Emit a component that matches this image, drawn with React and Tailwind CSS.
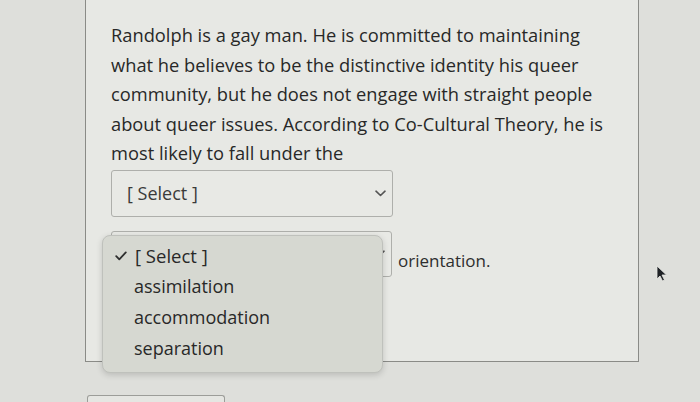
import React from "react";

function Chevron({ className }) {
  return (
    <svg className={className} width="11" height="7" viewBox="0 0 11 7" fill="none">
      <path d="M1 1.2 L5.5 5.5 L10 1.2" stroke="#555" strokeWidth="1.6" strokeLinecap="round" strokeLinejoin="round" />
    </svg>
  );
}

export default function App() {
  const font = { fontFamily: "'Open Sans', Lato, sans-serif" };
  return (
    <div className="relative w-[700px] h-[402px] overflow-hidden bg-[#dedfdb] text-[#282828]" style={font}>
      <div className="ml-[85px] w-[554px] h-[362px] border-l border-r border-b border-[#8a8b87] bg-[#e7e8e4] pl-[25px] pt-[20px]">
        <p className="text-[18.3px] leading-[29.5px] whitespace-nowrap">
          Randolph is a gay man. He is committed to maintaining<br />
          what he believes to be the distinctive identity his queer<br />
          community, but he does not engage with straight people<br />
          about queer issues. According to Co-Cultural Theory, he is<br />
          most likely to fall under the
        </p>
        <div className="mt-[2px] w-[282px] h-[47px] rounded-[3px] border border-[#aeafab] bg-[#e8e9e5] flex items-center justify-between pl-[15px] pr-[6px]">
          <span className="text-[18px] text-[#3a3a3a]">[ Select ]</span>
          <Chevron />
        </div>
        <div className="mt-[14px] flex items-start gap-[6px]">
          <div className="w-[281px] h-[46px] rounded-[3px] border border-[#aeafab] bg-[#e8e9e5] flex items-center justify-end pr-[6px]">
            <Chevron />
          </div>
          <span className="text-[17px] text-[#2e2e2e] mt-[17px]">orientation.</span>
        </div>
      </div>
      <div className="ml-[87px] mt-[33px] w-[138px] h-[7px] rounded-t-[3px] border-t border-l border-r border-[#9c9d99] bg-[#e5e6e2]" />

      {/* open dropdown menu */}
      <div className="absolute left-[102px] top-[235px] w-[281px] h-[138px] rounded-[8px] bg-[#d6d8d1] border border-[#bfc1bc] shadow-[0_2px_6px_rgba(0,0,0,0.16)] pt-[4px]">
        <div className="flex items-center h-[31px] pl-[12px] text-[18.5px]">
          <svg width="12" height="10" viewBox="0 0 12 10" fill="none" className="mr-[8px]">
            <path d="M1.2 5.2 L4.3 8.4 L10.8 1.4" stroke="#2f2f2f" strokeWidth="1.8" strokeLinecap="round" strokeLinejoin="round" />
          </svg>
          <span>[ Select ]</span>
        </div>
        <div className="flex items-center h-[31px] pl-[31px] text-[18px]">assimilation</div>
        <div className="flex items-center h-[31px] pl-[31px] text-[18px]">accommodation</div>
        <div className="flex items-center h-[31px] pl-[31px] text-[18px]">separation</div>
      </div>

      {/* mouse cursor */}
      <svg className="absolute left-[656px] top-[265px]" width="12" height="17" viewBox="0 0 12 17">
        <path d="M1 1 L1 14 L4 11 L6.5 16 L8.5 15 L6 10 L10.5 10 Z" fill="#1f2226" stroke="#e9eae6" strokeWidth="0.8" />
      </svg>
    </div>
  );
}
